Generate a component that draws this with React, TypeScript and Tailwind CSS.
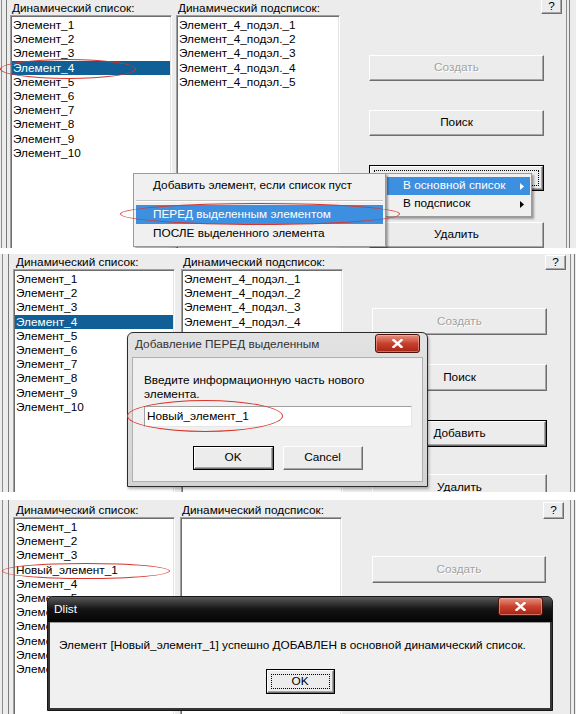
import React from "react";

const FONT = "font-['Liberation_Sans',Arial,sans-serif]";

const MAIN = Array.from({ length: 10 }, (_, i) => `Элемент_${i + 1}`);
const SUB = Array.from({ length: 5 }, (_, i) => `Элемент_4_подэл._${i + 1}`);
const MAIN_NEW = [
  "Элемент_1",
  "Элемент_2",
  "Элемент_3",
  "Новый_элемент_1",
  ...Array.from({ length: 7 }, (_, i) => `Элемент_${i + 4}`),
];

function ListBox({
  items,
  selected,
  className = "",
}: {
  items: string[];
  selected?: number;
  className?: string;
}) {
  return (
    <div
      className={`shrink-0 bg-white border border-t-[#a0a0a0] border-l-[#a0a0a0] border-b-white border-r-white shadow-[inset_1px_1px_0_#6e6e6e,inset_-1px_-1px_0_#e3e3e3] px-[1px] pb-[1px] pt-[2px] ${className}`}
    >
      {items.map((t, i) => (
        <div
          key={i}
          className={`h-[14.2px] leading-[14.2px] pl-[1px] whitespace-nowrap ${
            i === selected ? "bg-[#105f96] text-white" : ""
          }`}
        >
          {t}
        </div>
      ))}
    </div>
  );
}

function Btn({
  children,
  disabled,
  def,
  focus,
  className = "",
}: {
  children: React.ReactNode;
  disabled?: boolean;
  def?: boolean;
  focus?: boolean;
  className?: string;
}) {
  return (
    <div className={`relative shrink-0 ${def ? "border border-black" : ""} ${className}`}>
      <div
        className={`h-full w-full flex items-center justify-center bg-[#ececec] border border-t-white border-l-white border-b-[#6e6e6e] border-r-[#6e6e6e] shadow-[inset_-1px_-1px_0_#a6a6a6] ${
          disabled ? "text-[#a3a3a3] [text-shadow:1px_1px_0_#ffffff]" : ""
        }`}
      >
        {children}
      </div>
      {focus && (
        <div className="absolute inset-[4px] border border-dotted border-black pointer-events-none" />
      )}
    </div>
  );
}

function HelpBtn({ className = "" }: { className?: string }) {
  return (
    <div
      className={`w-[21px] shrink-0 flex items-center justify-center leading-none bg-[#ececec] border border-t-white border-l-white border-b-[#6e6e6e] border-r-[#6e6e6e] shadow-[inset_-1px_-1px_0_#a6a6a6] ${className}`}
    >
      ?
    </div>
  );
}

function LeftFrame({ w, a, b }: { w: string; a: string; b: string }) {
  return (
    <div className={`shrink-0 flex ${w}`}>
      <div className={`w-px bg-[#8c8c8c] ${a}`} />
      <div className={`w-px bg-[#7a7a7a] ${b}`} />
    </div>
  );
}

function RightFrame({ w, gap }: { w: string; gap: string }) {
  return (
    <div className={`shrink-0 flex ${w}`}>
      <div className="w-px bg-[#8c8c8c]" />
      <div className={`w-px bg-[#7a7a7a] ${gap}`} />
    </div>
  );
}

function Ring({ className }: { className: string }) {
  return (
    <div
      className={`absolute z-30 rounded-[50%] border border-[#d8342c] pointer-events-none ${className}`}
    />
  );
}

function Arrow() {
  return (
    <svg width="4" height="7" viewBox="0 0 4 7">
      <path d="M0 0L4 3.5L0 7z" fill="currentColor" />
    </svg>
  );
}

function CloseBtn({ className }: { className: string }) {
  return (
    <div
      className={`absolute flex items-center justify-center w-[45px] h-[19px] rounded-[3px] border border-[#4a1208] bg-gradient-to-b from-[#e49080] via-[#c9412d] to-[#a52414] shadow-[inset_0_0_0_1px_rgba(255,200,190,0.45)] ${className}`}
    >
      <svg width="11" height="9" viewBox="0 0 11 9">
        <path d="M1.5 1L9.5 8M9.5 1L1.5 8" stroke="white" strokeWidth="2.4" strokeLinecap="square" />
      </svg>
    </div>
  );
}

function Panel1() {
  return (
    <div className="relative h-[248px] overflow-hidden bg-[#ececec] flex">
      <LeftFrame w="w-[10px]" a="ml-[1px]" b="ml-[4px]" />
      <div className="w-[162px] shrink-0 flex flex-col">
        <div className="h-[17px] pt-[1px] pl-[2px] leading-[14px] whitespace-nowrap">
          Динамический список:
        </div>
        <ListBox items={MAIN} selected={3} className="h-[260px]" />
      </div>
      <div className="w-[164px] shrink-0 ml-[4px] flex flex-col">
        <div className="h-[17px] pt-[1px] pl-[2px] leading-[14px] whitespace-nowrap">
          Динамический подсписок:
        </div>
        <ListBox items={SUB} className="h-[260px]" />
      </div>
      <div className="w-[197px] shrink-0 ml-[29px] flex flex-col items-start">
        <HelpBtn className="self-end mr-[4px] h-[14px] border-t-0" />
        <Btn disabled className="w-[175px] h-[26px] mt-[41px]">Создать</Btn>
        <Btn className="w-[175px] h-[26px] mt-[29px]">Поиск</Btn>
        <Btn def focus className="w-[175px] h-[26px] mt-[29px]">Добавить</Btn>
        <Btn className="w-[175px] h-[26px] mt-[31px]">Удалить</Btn>
      </div>
      <RightFrame w="w-[10px]" gap="ml-[2px]" />

      {/* first-level popup */}
      <div className="absolute z-10 left-[385px] top-[173px] w-[147px] bg-[#f0f0f0] border border-[#9a9a9a] shadow-[2px_2px_2px_rgba(0,0,0,0.35)] px-[1px] py-[3px]">
        <div className="h-[18px] flex items-center justify-between pl-[16px] pr-[6px] bg-[#3d8fdf] text-white">
          <span>В основной список</span>
          <Arrow />
        </div>
        <div className="h-[18px] flex items-center justify-between pl-[16px] pr-[6px]">
          <span>В подсписок</span>
          <Arrow />
        </div>
      </div>

      {/* submenu */}
      <div className="absolute z-20 left-[133px] top-[173px] w-[253px] bg-[#f0f0f0] border border-[#9a9a9a] shadow-[2px_2px_2px_rgba(0,0,0,0.35)] px-[2px] pt-[2px] pb-[3px]">
        <div className="h-[20px] flex items-center pl-[17px] whitespace-nowrap">
          Добавить элемент, если список пуст
        </div>
        <div className="h-[9px] flex flex-col justify-center">
          <div className="h-px bg-[#c4c4c4]" />
          <div className="h-px bg-white" />
        </div>
        <div className="h-[19px] flex items-center pl-[17px] bg-[#3d8fdf] text-white whitespace-nowrap">
          ПЕРЕД выделенным элементом
        </div>
        <div className="h-[19px] flex items-center pl-[17px] whitespace-nowrap">
          ПОСЛЕ выделенного элемента
        </div>
      </div>

      <Ring className="left-0 top-[59px] w-[136px] h-[20px]" />
      <Ring className="left-[120px] top-[203px] w-[280px] h-[22px]" />
    </div>
  );
}

function Panel2() {
  return (
    <div className="relative h-[238px] overflow-hidden bg-[#ececec] flex">
      <LeftFrame w="w-[13px]" a="ml-[2px]" b="ml-[5px]" />
      <div className="w-[162px] shrink-0 flex flex-col">
        <div className="h-[18px] pt-[1px] pl-[3px] leading-[14px] whitespace-nowrap">
          Динамический список:
        </div>
        <ListBox items={MAIN} selected={3} className="h-[260px]" />
      </div>
      <div className="w-[162px] shrink-0 ml-[6px] flex flex-col">
        <div className="h-[18px] pt-[1px] pl-[2px] leading-[14px] whitespace-nowrap">
          Динамический подсписок:
        </div>
        <ListBox items={SUB} className="h-[260px]" />
      </div>
      <div className="w-[198px] shrink-0 ml-[29px] flex flex-col items-start">
        <HelpBtn className="self-end mr-[4px] mt-[1px] h-[15px]" />
        <Btn disabled className="w-[175px] h-[27px] mt-[38px]">Создать</Btn>
        <Btn className="w-[175px] h-[27px] mt-[29px]">Поиск</Btn>
        <Btn def className="w-[175px] h-[27px] mt-[29px]">Добавить</Btn>
        <Btn className="w-[175px] h-[27px] mt-[27px]">Удалить</Btn>
      </div>
      <RightFrame w="w-[6px]" gap="ml-[3px]" />

      <div className="absolute z-10 left-[127px] top-[78px] w-[301px] h-[155px] rounded-t-[6px] border border-[#2b2b2b] bg-gradient-to-b from-[#e2e2e2] to-[#d3d3d3] shadow-[1px_2px_3px_rgba(0,0,0,0.3)] flex flex-col px-[4px] pb-[4px]">
        <div className="h-[24px] shrink-0 flex items-center pl-[3px] text-[#333333] whitespace-nowrap">
          Добавление ПЕРЕД выделенным
        </div>
        <CloseBtn className="right-[7px] top-[1px]" />
        <div className="flex-1 bg-[#f0f0f0] border border-[#b0b0b0] pl-[11px] pt-[15px]">
          <div className="leading-[14px]">Введите информационную часть нового</div>
          <div className="leading-[14px]">элемента.</div>
          <div className="mt-[5px] w-[268px] h-[21px] bg-white border border-t-[#a0a0a0] border-l-[#a0a0a0] border-b-[#e6e6e6] border-r-[#e6e6e6] flex items-center pl-[2px]">
            Новый_элемент_1
          </div>
          <div className="mt-[19px] -ml-[11px] flex justify-center gap-[9px]">
            <Btn def className="w-[81px] h-[24px]">OK</Btn>
            <Btn className="w-[80px] h-[24px]">Cancel</Btn>
          </div>
        </div>
      </div>

      <Ring className="left-[127px] top-[146px] w-[156px] h-[32px]" />
    </div>
  );
}

function Panel3() {
  return (
    <div className="relative h-[214px] overflow-hidden bg-[#ececec] flex">
      <LeftFrame w="w-[13px]" a="ml-[2px]" b="ml-[5px]" />
      <div className="w-[162px] shrink-0 flex flex-col">
        <div className="h-[20px] pt-[3px] pl-[3px] leading-[14px] whitespace-nowrap">
          Динамический список:
        </div>
        <ListBox items={MAIN_NEW} className="h-[260px]" />
      </div>
      <div className="w-[162px] shrink-0 ml-[5px] flex flex-col">
        <div className="h-[20px] pt-[3px] pl-[2px] leading-[14px] whitespace-nowrap">
          Динамический подсписок:
        </div>
        <ListBox items={[]} className="h-[260px]" />
      </div>
      <div className="w-[198px] shrink-0 ml-[30px] flex flex-col items-start">
        <HelpBtn className="self-end mr-[6px] mt-[2px] h-[17px]" />
        <Btn disabled className="w-[174px] h-[27px] mt-[37px]">Создать</Btn>
        <Btn className="w-[174px] h-[27px] mt-[29px]">Поиск</Btn>
      </div>
      <RightFrame w="w-[6px]" gap="ml-[3px]" />

      <div className="absolute z-10 left-[47px] top-[96px] w-[506px] h-[115px] rounded-t-[6px] border border-[#161616] bg-[#353535] flex flex-col px-[2px] pb-[2px]">
        <div className="h-[25px] shrink-0 -mx-[2px] rounded-t-[5px] bg-gradient-to-b from-[#5a5a5a] via-[#141414] to-[#050505] flex items-center pl-[6px] text-white">
          Dlist
        </div>
        <CloseBtn className="right-[9px] top-0 h-[18px]" />
        <div className="flex-1 bg-[#f0f0f0] border-t border-[#9a9a9a] pl-[9px] pt-[15px]">
          <div className="leading-[14px] whitespace-nowrap">
            Элемент [Новый_элемент_1] успешно ДОБАВЛЕН в основной динамический список.
          </div>
          <div className="mt-[17px] -ml-[9px] flex justify-center">
            <Btn def focus className="w-[69px] h-[25px]">OK</Btn>
          </div>
        </div>
      </div>

      <Ring className="left-[2px] top-[63px] w-[168px] h-[16px]" />
    </div>
  );
}

export default function App() {
  return (
    <div className={`w-[576px] h-[714px] overflow-hidden bg-white text-[11.8px] text-black ${FONT}`}>
      <Panel1 />
      <div className="h-[6px]" />
      <Panel2 />
      <div className="h-[8px]" />
      <Panel3 />
    </div>
  );
}
